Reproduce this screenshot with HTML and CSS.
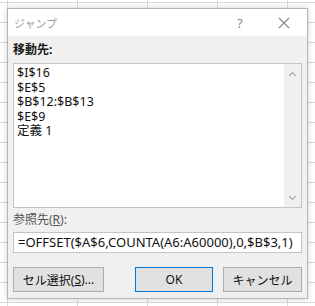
FILE: index.html
```html
<!DOCTYPE html>
<html lang="ja">
<head>
<meta charset="utf-8">
<link rel="stylesheet" href="styles.css">
</head>
<body>
<div class="dialog">
  <div class="titlebar">
    <span class="title">ジャンプ</span>
    <span class="help">?</span>
    <span class="close"><svg width="12" height="12" viewBox="0 0 12 12"><path d="M1 1L11 11M11 1L1 11" stroke="#8a8a8a" stroke-width="1.1" fill="none"/></svg></span>
  </div>
  <div class="content">
    <div class="label strong">移動先:</div>
    <div class="listbox">
      <div class="items">
        <div class="item">$I$16</div>
        <div class="item">$E$5</div>
        <div class="item">$B$12:$B$13</div>
        <div class="item">$E$9</div>
        <div class="item">定義 1</div>
      </div>
      <div class="scrollbar">
        <svg class="arrow" width="9" height="6" viewBox="0 0 9 6"><path d="M1 5L4.5 1.5L8 5" stroke="#a8a8a8" stroke-width="1.1" fill="none"/></svg>
        <svg class="arrow" width="9" height="6" viewBox="0 0 9 6"><path d="M1 1L4.5 4.5L8 1" stroke="#a8a8a8" stroke-width="1.1" fill="none"/></svg>
      </div>
    </div>
    <div class="label ref">参照先(<u>R</u>):</div>
    <div class="input">=OFFSET($A$6,COUNTA(A6:A60000),0,$B$3,1)</div>
    <div class="buttons">
      <div class="btn sel">セル選択(<u>S</u>)...</div>
      <div class="spacer"></div>
      <div class="btn ok">OK</div>
      <div class="btn cancel">キャンセル</div>
    </div>
  </div>
</div>
</body>
</html>
```

FILE: styles.css
```css
html, body {
  margin: 0;
  height: 100%;
}
body {
  width: 315px;
  height: 306px;
  overflow: hidden;
  background-color: #ffffff;
  background-image:
    repeating-linear-gradient(to right, transparent 0, transparent 7px, #dadada 7px, #dadada 8px, transparent 8px, transparent 70px),
    repeating-linear-gradient(to bottom, transparent 0, transparent 2px, #dadada 2px, #dadada 3px, transparent 3px, transparent 20px);
  background-size: 70px 20px, 70px 20px;
  font-family: "Noto Sans", "Noto Sans CJK JP", sans-serif;
  padding: 8px 0 0 7px;
  box-sizing: border-box;
}
.dialog {
  width: 301px;
  height: 291px;
  box-sizing: border-box;
  border: 1px solid #b4b4b4;
  background: #f0f0f0;
  box-shadow: 0 0 6px rgba(0,0,0,0.18);
  display: flex;
  flex-direction: column;
}
.titlebar {
  height: 27px;
  background: #ffffff;
  display: flex;
  align-items: center;
  padding: 0 0 0 6px;
  flex: none;
}
.title {
  font-size: 11px;
  color: #9a9a9a;
  flex: 1;
}
.help {
  font-size: 13px;
  color: #8a8a8a;
  width: 12px;
  margin-right: 29px;
}
.close {
  display: flex;
  width: 12px;
  margin-right: 17px;
}
.content {
  flex: 1;
  padding: 0 5px 0 5px;
  display: flex;
  flex-direction: column;
}
.label {
  font-size: 12px;
  height: 27px;
  line-height: 27px;
  color: #333;
}
.label.strong {
  font-weight: 700;
  color: #1a1a1a;
}
.label.ref {
  height: 24px;
  line-height: 24px;
  color: #555;
}
.listbox {
  height: 145px;
  box-sizing: border-box;
  border: 1px solid #c4c4c4;
  background: #fff;
  display: flex;
  flex: none;
}
.items {
  flex: 1;
  padding: 1px 0 0 3px;
  font-size: 12.5px;
  color: #111;
}
.item {
  height: 14.5px;
  line-height: 15px;
}
.scrollbar {
  width: 17px;
  background: #f0f0f0;
  display: flex;
  flex-direction: column;
  justify-content: space-between;
  align-items: center;
  padding: 7px 0 6px;
}
.arrow { display: block; }
.input {
  height: 21px;
  box-sizing: border-box;
  border: 1px solid #c4c4c4;
  background: #fff;
  font-size: 13px;
  line-height: 19px;
  padding-left: 4px;
  color: #111;
  white-space: nowrap;
  overflow: hidden;
  flex: none;
}
.buttons {
  display: flex;
  margin-top: 14px;
  height: 25px;
}
.btn {
  box-sizing: border-box;
  height: 25px;
  border: 1px solid #adadad;
  background: #e1e1e1;
  font-size: 12px;
  display: flex;
  align-items: center;
  justify-content: center;
  color: #111;
}
.btn.sel { width: 91px; }
.spacer { flex: 1; }
.btn.ok {
  width: 78px;
  border: 1px solid #0078d7;
  margin-right: 10px;
}
.btn.cancel { width: 79px; }
```
